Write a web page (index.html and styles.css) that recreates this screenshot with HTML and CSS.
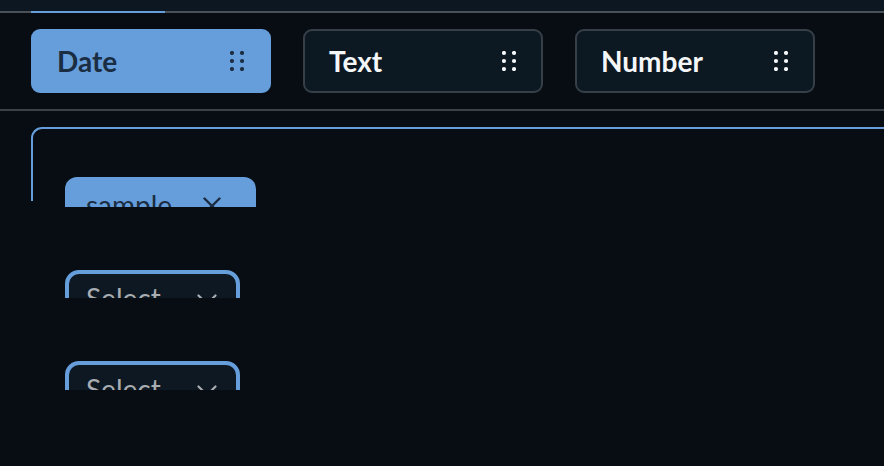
FILE: index.html
```html
<!DOCTYPE html>
<html lang="en">
<head>
<meta charset="utf-8">
<title>Fields</title>
<link rel="stylesheet" href="styles.css">
</head>
<body>
  <div class="tabbar">
    <div class="tab tab-lead"></div>
    <div class="tab tab-active"></div>
    <div class="tab tab-rest"></div>
  </div>

  <div class="fields">
    <div class="field field-active">
      <span class="field-label">Date</span>
      <svg class="grip" width="14" height="20" viewBox="0 0 14 20"><circle cx="2" cy="2" r="2.1"/><circle cx="12" cy="2" r="2.1"/><circle cx="2" cy="10" r="2.1"/><circle cx="12" cy="10" r="2.1"/><circle cx="2" cy="18" r="2.1"/><circle cx="12" cy="18" r="2.1"/></svg>
    </div>
    <div class="field">
      <span class="field-label">Text</span>
      <svg class="grip" width="14" height="20" viewBox="0 0 14 20"><circle cx="2" cy="2" r="2.1"/><circle cx="12" cy="2" r="2.1"/><circle cx="2" cy="10" r="2.1"/><circle cx="12" cy="10" r="2.1"/><circle cx="2" cy="18" r="2.1"/><circle cx="12" cy="18" r="2.1"/></svg>
    </div>
    <div class="field">
      <span class="field-label">Number</span>
      <svg class="grip" width="14" height="20" viewBox="0 0 14 20"><circle cx="2" cy="2" r="2.1"/><circle cx="12" cy="2" r="2.1"/><circle cx="2" cy="10" r="2.1"/><circle cx="12" cy="10" r="2.1"/><circle cx="2" cy="18" r="2.1"/><circle cx="12" cy="18" r="2.1"/></svg>
    </div>
  </div>

  <div class="drop-area">
    <div class="panel">
      <div class="rows">
        <div class="clip clip-1">
          <div class="tag">
            <span class="tag-label">sample</span>
            <svg class="tag-x" width="20" height="20" viewBox="0 0 20 20"><path d="M2.5 2.5 L17.5 17.5 M17.5 2.5 L2.5 17.5"/></svg>
          </div>
        </div>
        <div class="clip clip-2">
          <div class="select">
            <span class="select-label">Select</span>
            <svg class="chev" width="20" height="12" viewBox="0 0 20 12"><path d="M1.5 1.5 L10 10 L18.5 1.5"/></svg>
          </div>
        </div>
        <div class="clip clip-3">
          <div class="select">
            <span class="select-label">Select</span>
            <svg class="chev" width="20" height="12" viewBox="0 0 20 12"><path d="M1.5 1.5 L10 10 L18.5 1.5"/></svg>
          </div>
        </div>
      </div>
    </div>
  </div>
</body>
</html>
```

FILE: styles.css
```css
* { box-sizing: border-box; }

html {
  background: #080d14;
}

body {
  margin: 0;
  padding: 0;
  min-height: 466px;
  overflow: hidden;
  background: #080d14;
  font-family: Lato, "Open Sans", sans-serif;
}

.tabbar {
  display: flex;
  height: 13px;
  background: #0d1721;
}
.tab {
  border-bottom: 2px solid #4a5158;
}
.tab-lead { width: 31px; }
.tab-active { width: 134px; border-bottom-color: #669ddb; }
.tab-rest { flex: 1; }

.fields {
  display: flex;
  gap: 32px;
  padding: 16px 31px;
  border-bottom: 2px solid #3b4148;
}

.field {
  width: 240px;
  height: 64px;
  display: flex;
  align-items: center;
  justify-content: space-between;
  padding: 0 25px 0 24px;
  border: 2px solid #363f48;
  border-radius: 9px;
  background: #0c1822;
  color: #f4f6f8;
}
.field-active {
  background: #669ddb;
  border-color: #669ddb;
  color: #1b2d42;
}
.field-label {
  font-size: 28px;
  font-weight: 700;
}
.grip { fill: currentColor; display: block; }

.drop-area {
  padding: 16px 0 0 31px;
}

.panel {
  height: 74px;
  border-top: 2px solid #669ddb;
  border-left: 2px solid #669ddb;
  border-top-left-radius: 11px;
  padding: 48px 0 0 32px;
}

.rows {
  display: flex;
  flex-direction: column;
  gap: 63px;
}

.clip { overflow: hidden; width: 200px; }
.clip-1 { height: 30px; }
.clip-2 { height: 28px; }
.clip-3 { height: 29px; }

.tag {
  width: 191px;
  height: 52px;
  display: flex;
  align-items: flex-start;
  justify-content: space-between;
  padding: 13px 34px 0 21px;
  background: #669ddb;
  border-radius: 12px;
  color: #1b2d42;
}
.tag-label {
  font-size: 28px;
  line-height: 30px;
}
.tag-x {
  display: block;
  margin-top: 6px;
  stroke: #1b2d42;
  stroke-width: 2.4;
  stroke-linecap: round;
  fill: none;
}

.select {
  width: 175px;
  height: 52px;
  display: flex;
  align-items: flex-start;
  justify-content: space-between;
  padding: 9px 19px 0 17px;
  border: 4px solid #669ddb;
  border-radius: 14px;
  background: #0d1822;
  color: #a9adb2;
}
.select-label {
  font-size: 28px;
  line-height: 30px;
}
.chev {
  display: block;
  margin-top: 11px;
  stroke: #a9adb2;
  stroke-width: 2.2;
  stroke-linecap: round;
  stroke-linejoin: round;
  fill: none;
}
```
